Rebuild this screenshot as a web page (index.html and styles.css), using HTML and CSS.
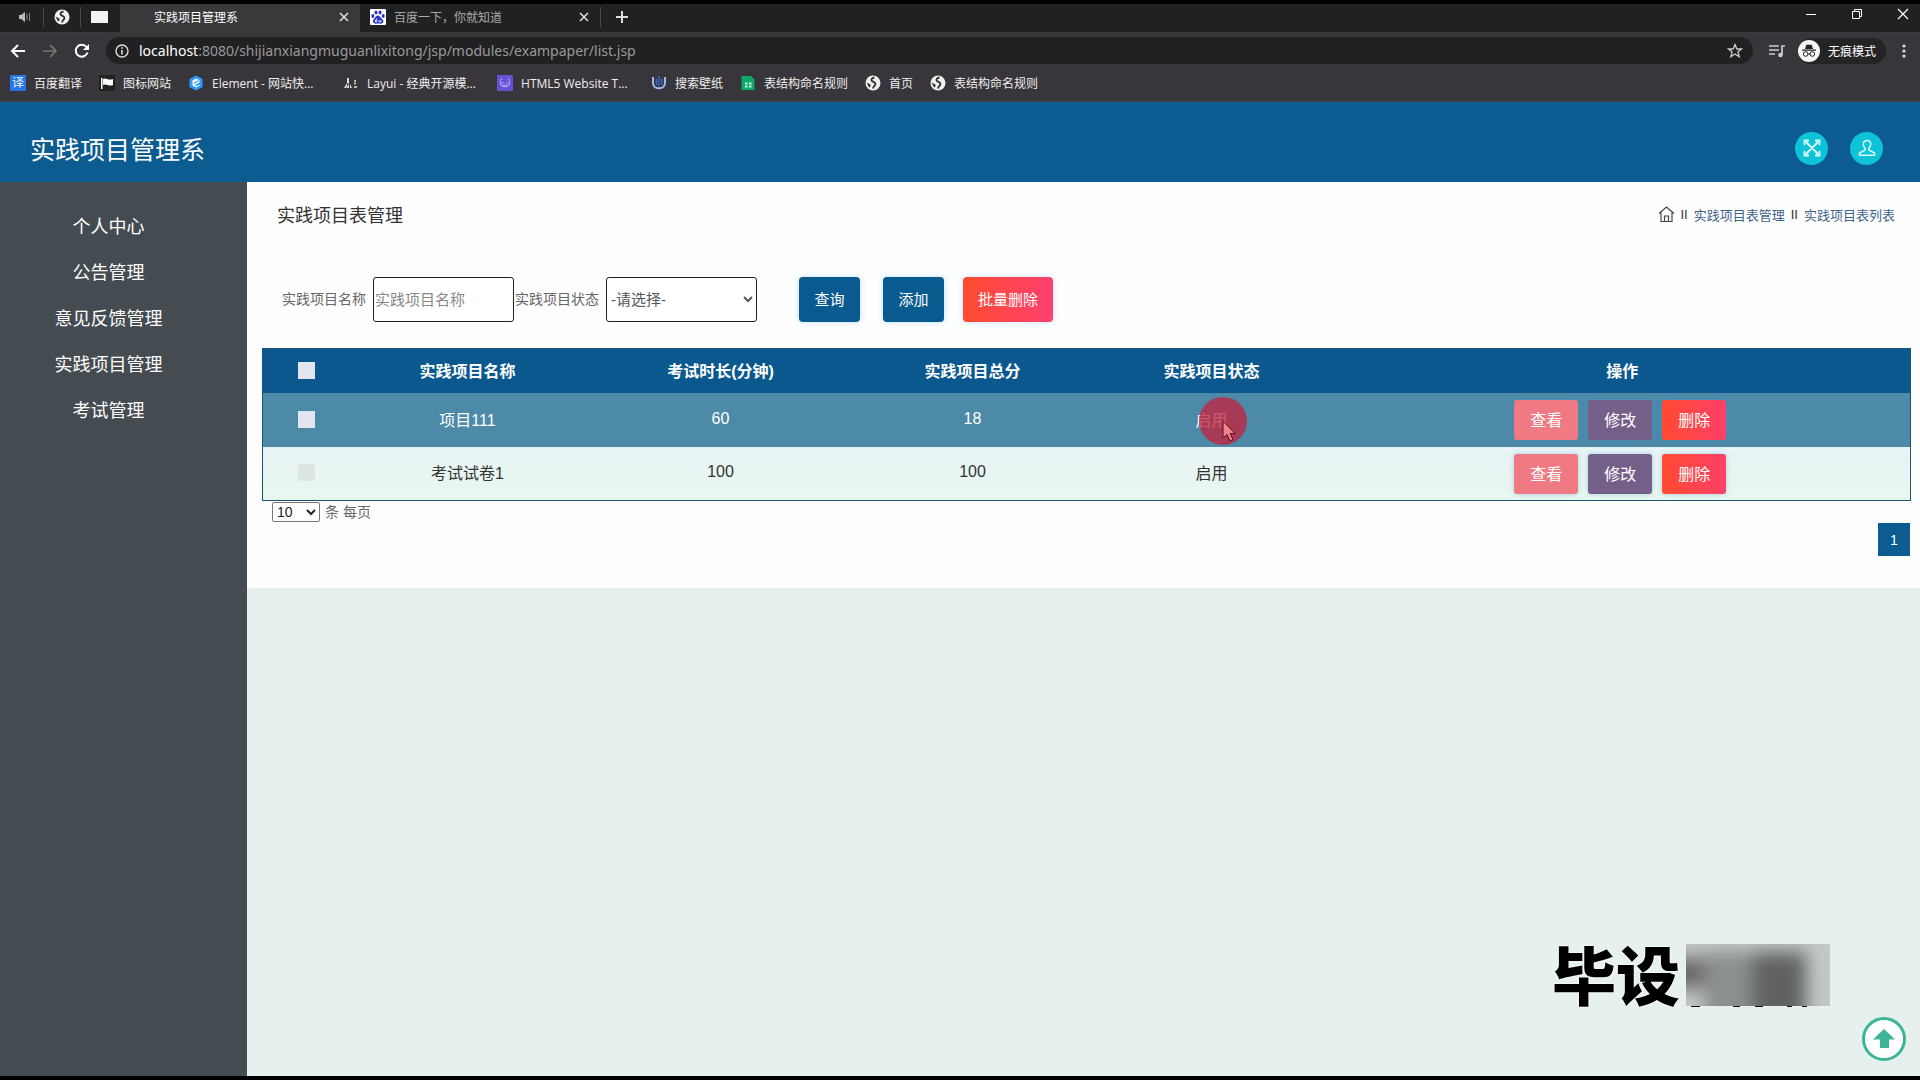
FILE: index.html
```html
<!DOCTYPE html>
<html lang="zh-CN">
<head>
<meta charset="utf-8">
<title>实践项目管理系</title>
<link rel="stylesheet" href="styles.css">
</head>
<body>
<svg class="defs" aria-hidden="true">
  <symbol id="globe" viewBox="0 0 16 16"><circle cx="8" cy="8" r="7.500" fill="#f1f1f1"/><path d="M9.500 2.500C6 3 6 5 7 6S10.500 7 10.500 9 8.500 10.500 8 13.500" fill="none" stroke="#333" stroke-width="1.800"/><path d="M1.500 7.500L5.500 9.500V11.500L4 12.500Z" fill="#333"/></symbol>
  <symbol id="close" viewBox="0 0 12 12"><path d="M2 2L10 10M10 2L2 10" fill="none" stroke="currentColor" stroke-width="1.600"/></symbol>
</svg>
<div class="browser">
  <div class="tabstrip">
    <div class="pinned">
      <span class="pin"><svg width="14" height="14" viewBox="0 0 14 14"><path d="M1 5H3L7 2V12L3 9H1Z" fill="#bbb"/><path d="M9 4V10M11.500 3V11" stroke="#888" fill="none"/></svg></span>
      <span class="pin"><svg width="16" height="16"><use href="#globe"/></svg></span>
      <span class="pin"><i class="blank"></i></span>
    </div>
    <div class="tab active"><i class="fav"></i><span class="tab-title">实践项目管理系</span><button class="plain" aria-label="关闭"><svg width="12" height="12"><use href="#close"/></svg></button></div>
    <div class="tab"><svg class="fav" viewBox="0 0 16 16"><rect width="16" height="16" rx="1" fill="#fff"/><g fill="#2a35cf"><ellipse cx="2.800" cy="7" rx="1.500" ry="2"/><ellipse cx="6" cy="3.500" rx="1.500" ry="2.100"/><ellipse cx="10" cy="3.500" rx="1.500" ry="2.100"/><ellipse cx="13.200" cy="7" rx="1.500" ry="2"/><path d="M8 6.500C10 6.500 10.500 9 12.500 10.500S13 15 10.500 14.700 6.500 14.500 5.500 14.700 1.800 12.500 3.500 10.500 6 6.500 8 6.500Z"/></g><path d="M6.700 9.500V13H5.500V11H6.700M9 11V13H11V11" stroke="#fff" stroke-width=".8" fill="none"/></svg><span class="tab-title">百度一下，你就知道</span><button class="plain" aria-label="关闭"><svg width="12" height="12"><use href="#close"/></svg></button></div>
    <button class="plain newtab" aria-label="新标签页"><svg width="14" height="14" viewBox="0 0 14 14"><path d="M7 1V13M1 7H13" stroke="#ddd" stroke-width="2"/></svg></button>
    <div class="winctl">
      <button class="plain" aria-label="最小化"><svg width="12" height="12" viewBox="0 0 12 12"><path d="M1 6.500H11" stroke="#fff"/></svg></button>
      <button class="plain" aria-label="还原"><svg width="12" height="12" viewBox="0 0 12 12"><path d="M1.500 3.500H8.500V10.500H1.500ZM3.500 3.500V1.500H10.500V8.500H8.500" fill="none" stroke="#fff"/></svg></button>
      <button class="plain" aria-label="关闭窗口"><svg width="12" height="12" viewBox="0 0 12 12"><path d="M1 1L11 11M11 1L1 11" stroke="#fff" stroke-width="1.200"/></svg></button>
    </div>
  </div>
  <div class="toolbar">
    <div class="nav">
      <button class="plain" aria-label="后退"><svg width="16" height="16" viewBox="0 0 16 16"><path d="M15 8H2M8 2L2 8L8 14" fill="none" stroke="#fff" stroke-width="2"/></svg></button>
      <button class="plain" aria-label="前进"><svg width="16" height="16" viewBox="0 0 16 16"><path d="M1 8H14M8 2L14 8L8 14" fill="none" stroke="#777" stroke-width="1.600"/></svg></button>
      <button class="plain" aria-label="刷新"><svg width="16" height="16" viewBox="0 0 16 16"><path d="M13.500 9.500A6 6 0 1 1 12.500 4" fill="none" stroke="#fff" stroke-width="2"/><path d="M15 1V7H9Z" fill="#fff"/></svg></button>
    </div>
    <div class="omnibox">
      <svg width="14" height="14" viewBox="0 0 14 14"><circle cx="7" cy="7" r="6" fill="none" stroke="#ddd" stroke-width="1.400"/><path d="M7 6V10.500M7 3.300V4.800" stroke="#ddd" stroke-width="1.600"/></svg>
      <span class="url"><b>localhost</b>:8080/shijianxiangmuguanlixitong/jsp/modules/exampaper/list.jsp</span>
      <svg width="16" height="16" viewBox="0 0 16 16"><path d="M8 1.500L9.900 6H14.500L10.900 9L12.200 13.700L8 11L3.800 13.700L5.100 9L1.500 6H6.100Z" fill="none" stroke="#ccc" stroke-width="1.300"/></svg>
    </div>
    <svg width="16" height="14" viewBox="0 0 16 14"><path d="M0 2H10M0 6H10M0 10H6M13 11V2H16" fill="none" stroke="#ccc" stroke-width="1.700"/><circle cx="11.500" cy="11" r="2.200" fill="#ccc"/></svg>
    <div class="incognito"><svg width="22" height="22" viewBox="0 0 22 22"><circle cx="11" cy="11" r="11" fill="#f5f5f5"/><path d="M7 9L8.300 4.800H13.700L15 9Z" fill="#222"/><path d="M4 10.200H18M10 14H12" stroke="#222" stroke-width="1.200"/><circle cx="7.700" cy="14" r="2.300" fill="none" stroke="#222"/><circle cx="14.300" cy="14" r="2.300" fill="none" stroke="#222"/></svg><span>无痕模式</span></div>
    <button class="plain" aria-label="菜单"><svg width="4" height="16" viewBox="0 0 4 16"><g fill="#ddd"><circle cx="2" cy="3" r="1.600"/><circle cx="2" cy="8" r="1.600"/><circle cx="2" cy="13" r="1.600"/></g></svg></button>
  </div>
  <div class="bookmarks">
    <a href="#"><i class="bm-yi">译</i><span>百度翻译</span></a>
    <a href="#"><svg viewBox="0 0 16 16"><rect width="16" height="16" fill="#222"/><path d="M2 3H3.500V14H2ZM4 4C7 2 9 6 14 4V10C10 12 7 8 4 10Z" fill="#fff"/></svg><span>图标网站</span></a>
    <a href="#"><svg viewBox="0 0 16 16"><path d="M8 .5L14.500 4V12L8 15.500L1.500 12V4Z" fill="#2d9bff"/><path d="M11.500 5L8 3.500 4.500 5.500V10.500L8 12.500 11.500 10.500V9.500L7.500 11.500V9.500L11.500 7.500Z" fill="#fff"/><path d="M6 7.500L11 5V6L6 9Z" fill="#2d9bff"/></svg><span class="wide-a">Element - 网站快...</span></a>
    <a href="#"><svg viewBox="0 0 16 16"><path d="M4 3H6V13H4ZM4 8L1 13H3L6 9ZM7 9L9 13H7Z" fill="#ddd"/><path d="M11 6H13M11 8.500H13M11 12H14" stroke="#ddd" stroke-width="1.500" fill="none"/></svg><span class="wide-b">Layui - 经典开源模...</span></a>
    <a href="#"><svg viewBox="0 0 16 16"><rect width="16" height="16" rx="1" fill="#6652d4"/><path d="M3.500 5.500L5 3.500M12.500 5.500L11 3.500M3.500 6C2.500 13.500 13.500 13.500 12.500 6M6 7V8.500M10 7V8.500M6.500 10H9.500" stroke="#b4a6ff" stroke-width="1.200" fill="none"/></svg><span class="wide-b">HTML5 Website T...</span></a>
    <a href="#"><svg viewBox="0 0 16 16"><path d="M2 2V8C2 15 14 15 14 8V2" fill="none" stroke="#9db8ee" stroke-width="2"/><path d="M5.500 4V10M8 1V11M10.800 4V10" stroke="#3d69c9" stroke-width="1.500"/></svg><span>搜索壁纸</span></a>
    <a href="#"><svg viewBox="0 0 16 16"><path d="M1.500 1H11L14.500 4.500V15H1.500Z" fill="#0ca968"/><path d="M5 8.500H7.500M9 8.500H11.500M5 11.500H7.500M9 11.500H11.500" stroke="#c8ffe2" stroke-width="1.800"/></svg><span>表结构命名规则</span></a>
    <a href="#"><svg><use href="#globe"/></svg><span>首页</span></a>
    <a href="#"><svg><use href="#globe"/></svg><span>表结构命名规则</span></a>
  </div>
</div>

<header class="header">
  <h1>实践项目管理系</h1>
  <div class="header-actions">
    <button class="round" aria-label="全屏"><svg width="18" height="18" viewBox="0 0 18 18"><path d="M3 3L15 15M15 3L3 15M1.500 6V1.500H6M12 1.500H16.500V6M16.500 12V16.500H12M6 16.500H1.500V12" fill="none" stroke="#d8fbff" stroke-width="1.800"/></svg></button>
    <button class="round" aria-label="用户"><svg width="18" height="18" viewBox="0 0 18 18"><path d="M9 1.500C11.500 1.500 13 3.200 12.700 5.500C12.500 7.500 11.700 8.500 10.800 9.500V11L16.500 14V16.200H1.500V14L7.200 11V9.500C6.300 8.500 5.500 7.500 5.300 5.500C5 3.200 6.500 1.500 9 1.500Z" fill="none" stroke="#d8fbff" stroke-width="1.500"/></svg></button>
  </div>
</header>

<div class="body">
  <nav class="sidebar">
    <a href="#">个人中心</a>
    <a href="#">公告管理</a>
    <a href="#">意见反馈管理</a>
    <a href="#">实践项目管理</a>
    <a href="#">考试管理</a>
  </nav>
  <main class="main">
    <section class="card">
      <div class="card-head">
        <h2>实践项目表管理</h2>
        <div class="crumbs"><svg width="17" height="17" viewBox="0 0 17 17"><path d="M1 7.500L8.500 1L16 7.500M3 6.500V15.500H14V6.500M6.500 15.500V10H10.500V15.500" fill="none" stroke="#444" stroke-width="1.200"/></svg><span>II</span><a href="#">实践项目表管理</a><span>II</span><a href="#">实践项目表列表</a></div>
      </div>
      <form class="filters">
        <label for="pname">实践项目名称</label>
        <input id="pname" class="field name" type="text" placeholder="实践项目名称">
        <label for="pstate" class="second">实践项目状态</label>
        <select id="pstate" class="field state"><option>-请选择-</option></select>
        <button type="button" class="btn query">查询</button>
        <button type="button" class="btn add">添加</button>
        <button type="button" class="btn danger">批量删除</button>
      </form>
      <table class="grid">
        <colgroup><col class="c1"><col class="c2"><col class="c3"><col class="c4"><col class="c5"><col></colgroup>
        <thead><tr><th><input type="checkbox" aria-label="全选"></th><th>实践项目名称</th><th>考试时长(分钟)</th><th>实践项目总分</th><th>实践项目状态</th><th>操作</th></tr></thead>
        <tbody>
          <tr class="hover"><td><input type="checkbox" aria-label="选择 项目111"></td><td>项目111</td><td>60</td><td>18</td><td><span class="spot">启用<svg class="pointer" width="48" height="48" viewBox="0 0 48 48" aria-hidden="true"><circle cx="24" cy="24" r="24" fill="#c22540" fill-opacity=".78"/><path d="M24 24V41L28 37.500L31 44L34 42.500L31 36.500H36Z" fill="#f4828c" stroke="#5c1220"/></svg></span></td><td><div class="ops"><button class="op view">查看</button><button class="op edit">修改</button><button class="op del">删除</button></div></td></tr>
          <tr><td><input class="faint" type="checkbox" aria-label="选择 考试试卷1"></td><td>考试试卷1</td><td>100</td><td>100</td><td>启用</td><td><div class="ops"><button class="op view">查看</button><button class="op edit">修改</button><button class="op del">删除</button></div></td></tr>
        </tbody>
      </table>
      <div class="pagesize"><select id="size"><option>10</option></select><label for="size">条 每页</label></div>
      <div class="pager"><button>1</button></div>
    </section>
  </main>
</div>

<div class="watermark"><span>毕设</span><svg width="144" height="64" viewBox="0 0 144 64" aria-hidden="true">
  <defs><filter id="soft" x="-50%" y="-50%" width="200%" height="200%"><feGaussianBlur stdDeviation="9"/></filter><clipPath id="box"><rect width="144" height="62"/></clipPath></defs>
  <g clip-path="url(#box)"><rect width="144" height="62" fill="#c4c8c7"/><g filter="url(#soft)"><rect x="-20" y="14" width="38" height="30" fill="#666"/><rect x="18" y="8" width="52" height="80" fill="#8b8f8e"/><rect x="66" y="8" width="54" height="80" fill="#5f6261"/></g></g>
  <path d="M5 62H14V63H5ZM47 62H54V63H47ZM69 62H77V63H69ZM101 62H106V63H101ZM116 62H121V63H116Z" fill="#111"/></svg></div>
<a class="totop" href="#" aria-label="返回顶部"><svg width="44" height="44" viewBox="0 0 44 44"><circle cx="22" cy="22" r="20.500" fill="#fff" stroke="#3cb497" stroke-width="3"/><path d="M22 12L33 22.500H27V31H18V22.500H11Z" fill="#3cb497"/></svg></a>
</body>
</html>
```
FILE: styles.css
```css
* { box-sizing: border-box; }
html { background: #000; }
body {
  margin: 0;
  min-height: 100vh;
  padding: 4px 0;
  display: flex;
  flex-direction: column;
  background: #000;
  font-family: "Liberation Sans", "Noto Sans CJK SC", sans-serif;
  color: #333;
}
a { color: inherit; text-decoration: none; }
button, input, select { font-family: inherit; }
.defs { position: absolute; width: 0; height: 0; }
.plain { border: 0; padding: 0; background: none; color: #ddd; display: flex; align-items: center; justify-content: center; }

/* browser frame */
.browser { background: #39363b; font-family: "Open Sans", "Noto Sans CJK SC", sans-serif; font-size: 12px; color: #eee; }
.tabstrip { display: flex; height: 30px; padding-bottom: 4px; background: linear-gradient(#202221 28px, #39383b 28px); align-items: center; }
.pinned { display: flex; padding-left: 6px; width: 120px; }
.pin { width: 37px; height: 20px; display: flex; align-items: center; justify-content: center; }
.pin + .pin { border-left: 1px solid #484848; }
.blank { width: 17px; height: 12px; background: #f4f4f4; }
.tab { display: flex; align-items: center; width: 240px; height: 26px; padding: 0 10px; gap: 8px; color: #aaa; }
.tab.active { background: #39383b; box-shadow: 0 2px #39383b; color: #fff; }
.fav { width: 16px; height: 16px; }
.tab-title { flex: 1; white-space: nowrap; }
.newtab { height: 20px; padding-left: 14px; border-left: 1px solid #484848; }
.winctl { margin-left: auto; display: flex; gap: 34px; padding: 0 11px 6px 0; }
.toolbar { display: flex; align-items: center; height: 33px; gap: 16px; padding: 0 14px 0 10px; }
.nav { display: flex; gap: 16px; width: 80px; }
.omnibox { flex: 1; display: flex; align-items: center; height: 27px; border-radius: 14px; background: #212023; padding: 0 10px 0 9px; gap: 10px; }
.url { flex: 1; font-family: "Noto Sans", sans-serif; font-size: 14px; color: #999; line-height: 20px; white-space: nowrap; }
.url b { font-weight: 400; color: #fff; }
.incognito { display: flex; align-items: center; gap: 8px; height: 26px; padding-right: 10px; margin-left: -3px; border-radius: 13px; background: #242326; white-space: nowrap; color: #fff; }
.bookmarks { display: flex; align-items: center; height: 35px; gap: 17px; padding: 0 10px 2px; border-bottom: 1px solid #3c4448; }
.bookmarks a { display: flex; align-items: center; gap: 8px; white-space: nowrap; }
.bookmarks svg { width: 16px; height: 16px; }
.bm-yi { width: 16px; height: 16px; background: #2577e8; font-style: normal; line-height: 16px; text-align: center; }
.wide-a { width: 114px; }
.wide-b { width: 113px; }

/* application header */
.header { display: flex; align-items: center; justify-content: space-between; height: 80px; padding: 14px 37px 0 30px; background: #0c5b91; }
.header h1 { margin: 0; padding-top: 2px; font-size: 25px; font-weight: 400; line-height: 36px; color: #fff; }
.header-actions { display: flex; gap: 22px; padding-bottom: 2px; }
.round { width: 33px; height: 33px; border: 0; padding: 0; border-radius: 50%; background: #0dc3d5; display: flex; align-items: center; justify-content: center; }

.body { flex: 1; display: flex; }
.sidebar { width: 247px; padding: 22px 30px 0 0; background: #454c51; display: flex; flex-direction: column; }
.sidebar a { height: 46px; line-height: 46px; text-align: center; font-size: 18px; color: #fff; }
.main { flex: 1; background: #e6f1ef; }
.card { min-height: 406px; background: #fefeff; padding: 0 9px 0 15px; }
.card-head { display: flex; justify-content: space-between; align-items: center; height: 64px; padding: 0 16px 0 15px; }
.card-head h2 { margin: 0; font-size: 18px; font-weight: 400; }
.crumbs { display: flex; align-items: center; gap: 6px; font-size: 13px; color: #333; }
.crumbs a { color: #3d638a; }

.filters { display: flex; align-items: center; height: 102px; padding: 4px 0 0 20px; }
.filters label { font-size: 14px; color: #666; margin-right: 7px; padding-bottom: 2px; }
.filters .second { margin-left: 1px; }
.field { height: 45px; border: 1px solid #222; border-radius: 3px; background: #fff; font-size: 15px; color: #555; padding: 0 1px; }
.field::placeholder { color: #888; }
.name { width: 141px; }
.state { width: 151px; padding: 0; }
.btn { height: 45px; border: 0; border-radius: 4px; padding: 0 15px 2px; min-width: 61px; font-size: 15px; color: #fff; background: #095a8e; box-shadow: 0 0 6px #bfe0f5; }
.query { margin-left: 42px; }
.add { margin-left: 23px; }
.danger { margin-left: 19px; background: linear-gradient(90deg, #ff4b30, #ff4070); }

.grid { width: 100%; table-layout: fixed; border-collapse: collapse; border: 1px solid #1c5474; font-size: 16px; text-align: center; }
.c1 { width: 88px; }
.c2 { width: 234px; }
.c3 { width: 272px; }
.c4 { width: 232px; }
.c5 { width: 246px; }
.grid th, .grid td { padding: 0 0 2px; }
.grid th { height: 44px; background: #0b588f; color: #fff; }
.grid td { height: 54px; }
.grid tbody tr { background: linear-gradient(#e8f4f6, #e8f7ee); }
.grid tbody .hover { background: #4c8aa8; color: #fff; }
.grid input { appearance: none; width: 17px; height: 17px; margin: 0; background: #e3e5f0; vertical-align: middle; }
.grid .faint { background: #dce5e2; border-radius: 4px; }
.ops { display: flex; justify-content: center; gap: 10px; padding: 3px 4px 0 0; }
.op { width: 64px; height: 40px; border: 0; border-radius: 3px; padding: 0 0 2px; font-size: 16px; color: #fff; box-shadow: 0 0 5px rgba(70, 150, 210, .4); }
.view { background: #ef7a84; }
.edit { background: #745f88; }
.del { background: linear-gradient(90deg, #ff4a30, #ff4068); }
.spot { position: relative; }
.pointer { position: absolute; left: 4px; top: -15px; }

.pagesize { display: flex; align-items: center; gap: 5px; height: 21px; padding-left: 10px; font-size: 14px; color: #666; }
.pagesize label { padding-bottom: 2px; }
.pagesize select { width: 48px; height: 20px; padding: 0; border: 1px solid #777; border-radius: 2px; background: #fff; font-size: 14px; color: #222; }
.pager { display: flex; justify-content: flex-end; padding: 1px 1px 0 0; }
.pager button { width: 32px; height: 33px; border: 0; background: #0c5b91; color: #fff; font-size: 14px; }

/* floating overlays */
.watermark { position: fixed; right: 90px; bottom: 72px; display: flex; gap: 6px; height: 64px; font: 900 64px/56px "Noto Sans CJK SC", sans-serif; color: #000; text-shadow: 0 0 2px #fff, 0 0 2px #fff; }
.totop { position: fixed; right: 14px; bottom: 19px; height: 44px; }
```
